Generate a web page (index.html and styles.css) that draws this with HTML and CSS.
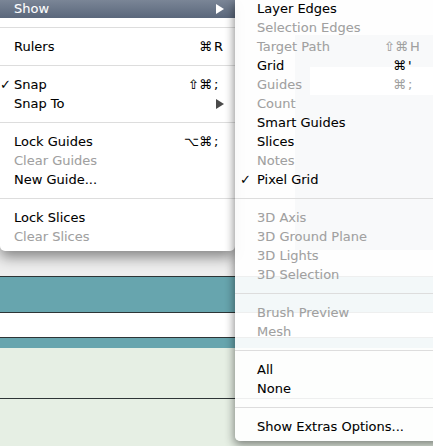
FILE: index.html
```html
<!DOCTYPE html>
<html>
<head>
<meta charset="utf-8">
<link rel="stylesheet" href="styles.css">
</head>
<body>
<div class="page">
  <div class="bg-top"></div>
  <div class="bg-line"></div>
  <div class="bg-teal bg-teal-tall"></div>
  <div class="bg-line"></div>
  <div class="bg-white"></div>
  <div class="bg-line"></div>
  <div class="bg-teal bg-teal-thin"></div>
  <div class="bg-green bg-green-a"></div>
  <div class="bg-line"></div>
  <div class="bg-green bg-green-b"></div>
</div>

<div class="ghost-dialog">
  <div class="ghost-field"></div>
</div>

<div class="menu menu-main">
  <div class="item active"><span class="mark"></span><span class="label">Show</span><span class="arrow arrow-light"></span></div>
  <div class="sep"></div>
  <div class="item"><span class="mark"></span><span class="label">Rulers</span><span class="sc"><span class="mods">⌘</span><span class="key">R</span></span></div>
  <div class="sep"></div>
  <div class="item"><span class="mark">✓</span><span class="label">Snap</span><span class="sc"><span class="mods">⇧⌘</span><span class="key">;</span></span></div>
  <div class="item"><span class="mark"></span><span class="label">Snap To</span><span class="arrow"></span></div>
  <div class="sep"></div>
  <div class="item"><span class="mark"></span><span class="label">Lock Guides</span><span class="sc"><span class="mods">⌥⌘</span><span class="key">;</span></span></div>
  <div class="item disabled"><span class="mark"></span><span class="label">Clear Guides</span></div>
  <div class="item"><span class="mark"></span><span class="label">New Guide...</span></div>
  <div class="sep"></div>
  <div class="item"><span class="mark"></span><span class="label">Lock Slices</span></div>
  <div class="item disabled"><span class="mark"></span><span class="label">Clear Slices</span></div>
</div>

<div class="menu menu-sub">
  <div class="item"><span class="mark"></span><span class="label">Layer Edges</span></div>
  <div class="item disabled"><span class="mark"></span><span class="label">Selection Edges</span></div>
  <div class="item disabled"><span class="mark"></span><span class="label">Target Path</span><span class="sc sc-wide"><span class="mods">⇧⌘</span><span class="key">H</span></span></div>
  <div class="item"><span class="mark"></span><span class="label">Grid</span><span class="sc sc-narrow"><span class="mods">⌘</span><span class="key">'</span></span></div>
  <div class="item disabled"><span class="mark"></span><span class="label">Guides</span><span class="sc sc-narrow"><span class="mods">⌘</span><span class="key">;</span></span></div>
  <div class="item disabled"><span class="mark"></span><span class="label">Count</span></div>
  <div class="item"><span class="mark"></span><span class="label">Smart Guides</span></div>
  <div class="item"><span class="mark"></span><span class="label">Slices</span></div>
  <div class="item disabled"><span class="mark"></span><span class="label">Notes</span></div>
  <div class="item"><span class="mark">✓</span><span class="label">Pixel Grid</span></div>
  <div class="sep"></div>
  <div class="item disabled"><span class="mark"></span><span class="label">3D Axis</span></div>
  <div class="item disabled"><span class="mark"></span><span class="label">3D Ground Plane</span></div>
  <div class="item disabled"><span class="mark"></span><span class="label">3D Lights</span></div>
  <div class="item disabled"><span class="mark"></span><span class="label">3D Selection</span></div>
  <div class="sep"></div>
  <div class="item disabled"><span class="mark"></span><span class="label">Brush Preview</span></div>
  <div class="item disabled"><span class="mark"></span><span class="label">Mesh</span></div>
  <div class="sep"></div>
  <div class="item"><span class="mark"></span><span class="label">All</span></div>
  <div class="item"><span class="mark"></span><span class="label">None</span></div>
  <div class="sep"></div>
  <div class="item"><span class="mark"></span><span class="label">Show Extras Options...</span></div>
</div>
</body>
</html>
```

FILE: styles.css
```css
html, body {
  margin: 0;
  padding: 0;
}
body {
  width: 433px;
  height: 446px;
  overflow: hidden;
  position: relative;
  font-family: "DejaVu Sans", sans-serif;
  font-size: 13px;
  background: #e6efe4;
}

.page {
  display: flex;
  flex-direction: column;
}
.bg-top { height: 276px; background: #eeeeee; }
.bg-line { height: 1px; background: #2e3536; }
.bg-teal { background: #67a5ae; }
.bg-teal-tall { height: 35px; }
.bg-teal-thin { height: 10px; }
.bg-white { height: 24px; background: #ffffff; }
.bg-green { background: #e6efe4; }
.bg-green-a { height: 50px; }
.bg-green-b { height: 47px; }

/* dialog window lying behind the translucent submenu */
.ghost-dialog {
  position: absolute;
  left: 295px;
  top: 35px;
  width: 140px;
  height: 215px;
  background: #a3b4c0;
  padding: 32px 0 0 15px;
  box-sizing: border-box;
}
.ghost-field {
  height: 28px;
  background: #ffffff;
}

.menu {
  position: absolute;
  display: flex;
  flex-direction: column;
  padding-bottom: 5px;
  border-radius: 0 0 5px 5px;
}
.menu-main {
  left: 0;
  top: -1px;
  width: 235px;
  background: #ffffff;
  box-shadow: 0 6px 14px rgba(0, 0, 0, 0.45);
  z-index: 1;
}
.menu-sub {
  left: 235px;
  top: -1px;
  width: 210px;
  background: rgba(255, 255, 255, 0.92);
  box-shadow: -1px 4px 10px rgba(0, 0, 0, 0.45);
  z-index: 2;
}

.item {
  height: 19px;
  display: flex;
  align-items: center;
  color: #000000;
  white-space: nowrap;
  padding-right: 11px;
  -webkit-text-stroke: 0.08px currentColor;
}
.item.disabled { color: #a0a0a0; }
.item.active {
  background: linear-gradient(#7c8798, #5a677b);
  color: #ffffff;
}

.mark {
  width: 14px;
  flex: none;
  font-size: 13px;
  text-align: left;
  -webkit-text-stroke: 0;
}
.menu-sub .mark {
  width: 22px;
  padding-left: 5px;
  box-sizing: border-box;
}

.sc {
  margin-left: auto;
  display: flex;
}
.mods { text-align: right; }
.key {
  width: 12px;
  padding-left: 2px;
  box-sizing: border-box;
}
.menu-sub .item { padding-right: 0; }
.sc-wide { margin-right: 25px; }
.sc-narrow { margin-right: 27px; }

.arrow {
  margin-left: auto;
  width: 0;
  height: 0;
  border-top: 5px solid transparent;
  border-bottom: 5px solid transparent;
  border-left: 8px solid #4a4a4a;
}
.arrow-light { border-left-color: #ffffff; }

.sep {
  height: 19px;
  display: flex;
  align-items: center;
}
.sep::before {
  content: "";
  flex: 1;
  height: 1px;
  background: #dddddd;
}
```
